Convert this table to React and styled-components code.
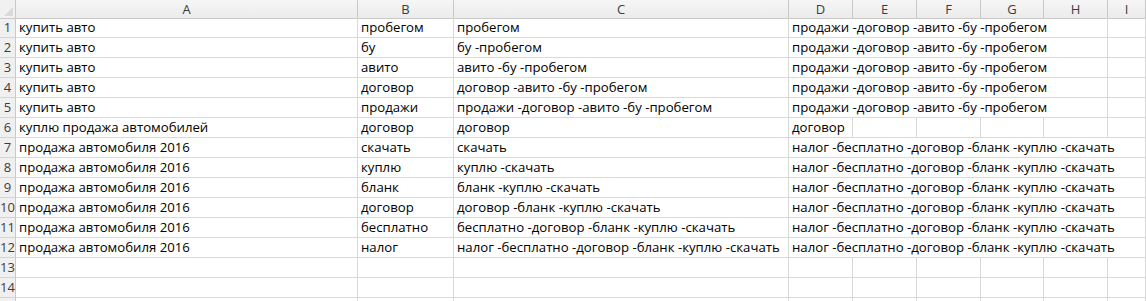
import React from "react";
import styled, { createGlobalStyle } from "styled-components";

const Global = createGlobalStyle`
  html, body {
    margin: 0;
    padding: 0;
    background: #ffffff;
    overflow: hidden;
  }
`;

// row header, A, B, C, D..H, I
const COLS = "16px 342px 96px 335px 64px 64px 64px 63px 64px 1fr";

const Sheet = styled.div`
  width: 1146px;
  height: 301px;
  overflow: hidden;
  font-family: "Open Sans", "Liberation Sans", sans-serif;
  font-size: 13.2px;
  color: #000;
`;

const Row = styled.div`
  display: grid;
  grid-template-columns: ${COLS};
  height: ${({ $head }) => ($head ? "18px" : "20px")};
`;

const Corner = styled.div`
  position: relative;
  background: #f1f1f1;
  border-right: 1px solid #c9c9c9;
  border-bottom: 1px solid #c9c9c9;
  box-sizing: border-box;

  &::after {
    content: "";
    position: absolute;
    right: 2px;
    bottom: 2px;
    width: 0;
    height: 0;
    border-left: 9px solid transparent;
    border-bottom: 9px solid #dadada;
  }
`;

const ColHead = styled.div`
  display: flex;
  align-items: center;
  justify-content: center;
  background: linear-gradient(#f6f6f6, #ebebeb);
  border-right: 1px solid #c9c9c9;
  border-bottom: 1px solid #c9c9c9;
  box-sizing: border-box;
  color: #3c3c3c;
  font-size: 13px;
`;

const RowHead = styled.div`
  display: flex;
  align-items: flex-end;
  justify-content: center;
  padding-bottom: 1px;
  background: #f0f0f0;
  border-right: 1px solid #c9c9c9;
  border-bottom: 1px solid #d4d4d4;
  box-sizing: border-box;
  color: #3c3c3c;
  font-size: 13px;
  white-space: nowrap;
`;

const Cell = styled.div`
  grid-column: span ${({ $span }) => $span || 1};
  display: flex;
  align-items: flex-end;
  padding: 0 0 1px 3px;
  border-right: 1px solid #d9d9d9;
  border-bottom: 1px solid #d9d9d9;
  box-sizing: border-box;
  white-space: nowrap;
  overflow: hidden;
`;

const letters = ["A", "B", "C", "D", "E", "F", "G", "H", "I"];

const LONG1 = "продажи -договор -авито -бу -пробегом";
const LONG2 = "налог -бесплатно -договор -бланк -куплю -скачать";

// [A, B, C, D, how many columns D's text runs over]
const rows = [
  ["купить авто", "пробегом", "пробегом", LONG1, 5],
  ["купить авто", "бу", "бу -пробегом", LONG1, 5],
  ["купить авто", "авито", "авито -бу -пробегом", LONG1, 5],
  ["купить авто", "договор", "договор -авито -бу -пробегом", LONG1, 5],
  ["купить авто", "продажи", "продажи -договор -авито -бу -пробегом", LONG1, 5],
  ["куплю продажа автомобилей", "договор", "договор", "договор", 1],
  ["продажа автомобиля 2016", "скачать", "скачать", LONG2, 6],
  ["продажа автомобиля 2016", "куплю", "куплю -скачать", LONG2, 6],
  ["продажа автомобиля 2016", "бланк", "бланк -куплю -скачать", LONG2, 6],
  ["продажа автомобиля 2016", "договор", "договор -бланк -куплю -скачать", LONG2, 6],
  ["продажа автомобиля 2016", "бесплатно", "бесплатно -договор -бланк -куплю -скачать", LONG2, 6],
  ["продажа автомобиля 2016", "налог", LONG2, LONG2, 6],
  null,
  null,
  null,
];

export default function App() {
  return (
    <Sheet>
      <Global />
      <Row $head>
        <Corner />
        {letters.map((l) => (
          <ColHead key={l}>{l}</ColHead>
        ))}
      </Row>
      {rows.map((r, i) => {
        const [a, b, c, d, span] = r || ["", "", "", "", 1];
        const rest = 6 - span;
        // last row only peeks in at the bottom edge, its number is out of view
        const label = i < 14 ? i + 1 : "";
        return (
          <Row key={i}>
            <RowHead>{label}</RowHead>
            <Cell>{a}</Cell>
            <Cell>{b}</Cell>
            <Cell>{c}</Cell>
            <Cell $span={span}>{d}</Cell>
            {Array.from({ length: rest }).map((_, k) => (
              <Cell key={k} />
            ))}
          </Row>
        );
      })}
    </Sheet>
  );
}
